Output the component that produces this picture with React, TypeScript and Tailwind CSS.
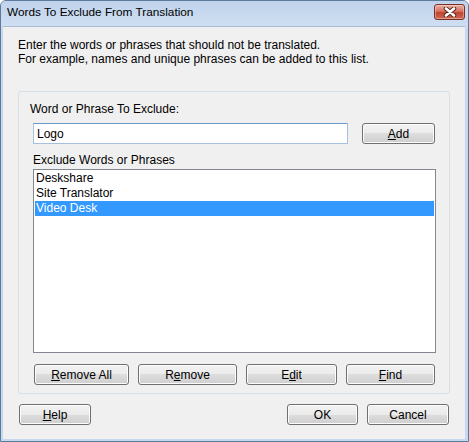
import type { ReactNode } from "react";

const btn =
  "flex items-center justify-center h-[21px] rounded-[3px] border border-[#707070] bg-[linear-gradient(to_bottom,#f2f2f2_0%,#ebebeb_50%,#dddddd_50%,#cfcfcf_100%)] shadow-[inset_0_0_0_1px_#fcfcfc] text-[12px] leading-none text-black";

function Btn({ w, children }: { w: string; children: ReactNode }) {
  return <button className={`${btn} ${w}`}>{children}</button>;
}

const items = ["Deskshare", "Site Translator", "Video Desk"];

export default function App() {
  return (
    <div
      className="w-[469px] h-[442px] flex flex-col bg-[#c6d8ee] border border-[#5d7a9c] rounded-t-[6px] overflow-hidden"
      style={{ fontFamily: '"Liberation Sans", Arial, sans-serif' }}
    >
      {/* title bar */}
      <div className="h-[25px] shrink-0 flex items-center justify-between pl-[6px] pr-[3px] bg-[linear-gradient(to_bottom,#c0d3ec,#cfdef2)]">
        <span className="text-[11.8px] text-black mt-[-1px]">Words To Exclude From Translation</span>
        <div className="w-[31px] h-[16px] mt-[-4px] rounded-[3px] border border-[#7a2e24] bg-[linear-gradient(to_bottom,#eab0a3_0%,#d6705f_45%,#c0432f_55%,#cf6a54_100%)] shadow-[inset_0_0_0_1px_rgba(255,255,255,0.35)] flex items-center justify-center">
          <svg width="14" height="10" viewBox="0 0 14 10">
            <path
              d="M3 1.5 L11 8.5 M11 1.5 L3 8.5"
              stroke="#4a2520"
              strokeWidth="4.4"
              strokeLinecap="round"
            />
            <path
              d="M3 1.5 L11 8.5 M11 1.5 L3 8.5"
              stroke="#ffffff"
              strokeWidth="2.6"
              strokeLinecap="round"
            />
          </svg>
        </div>
      </div>

      {/* client area */}
      <div className="flex-1 ml-[2px] mr-[3px] mb-[2px] bg-[#f0f0f0] border-t border-[#a9bcd6] flex flex-col text-[12px] leading-[14px] text-black">
        <div className="pl-[15px] pt-[11px]">
          <p>Enter the words or phrases that should not be translated.</p>
          <p>For example, names and unique phrases can be added to this list.</p>
        </div>

        {/* group box */}
        <div className="ml-[15px] mt-[25px] w-[432px] h-[303px] border border-[#d5dfe5] rounded-[3px] flex flex-col pl-[14px] pt-[10px]">
          <span className="ml-[-3px]">Word or Phrase To Exclude:</span>
          <div className="flex items-center mt-[7px]">
            <div className="w-[315px] h-[21px] bg-white border border-[#a6c1e0] border-t-[#6d96c9] flex items-center pl-[3px]">
              Logo
            </div>
            <Btn w="w-[73px] ml-[14px]">
              <span>
                <u>A</u>dd
              </span>
            </Btn>
          </div>
          <span className="mt-[9px]">Exclude Words or Phrases</span>
          <div className="mt-[2px] w-[403px] h-[184px] bg-white border border-[#828790] p-[1px]">
            {items.map((t, i) => (
              <div
                key={t}
                className={`h-[15px] pl-[1px] leading-[15px] ${
                  i === 2 ? "bg-[#3399ff] text-white" : ""
                }`}
              >
                {t}
              </div>
            ))}
          </div>
          <div className="flex mt-[11px] gap-[9px] ml-[1px]">
            <Btn w="w-[95px]">
              <span>
                <u>R</u>emove All
              </span>
            </Btn>
            <Btn w="w-[99px]">
              <span>
                R<u>e</u>move
              </span>
            </Btn>
            <Btn w="w-[91px]">
              <span>
                E<u>d</u>it
              </span>
            </Btn>
            <Btn w="w-[89px]">
              <span>
                <u>F</u>ind
              </span>
            </Btn>
          </div>
        </div>

        {/* dialog buttons */}
        <div className="flex mt-[10px] pl-[16px] w-[446px]">
          <Btn w="w-[72px]">
            <span>
              <u>H</u>elp
            </span>
          </Btn>
          <div className="flex-1" />
          <Btn w="w-[71px]">OK</Btn>
          <Btn w="w-[82px] ml-[9px]">Cancel</Btn>
        </div>
      </div>
    </div>
  );
}
